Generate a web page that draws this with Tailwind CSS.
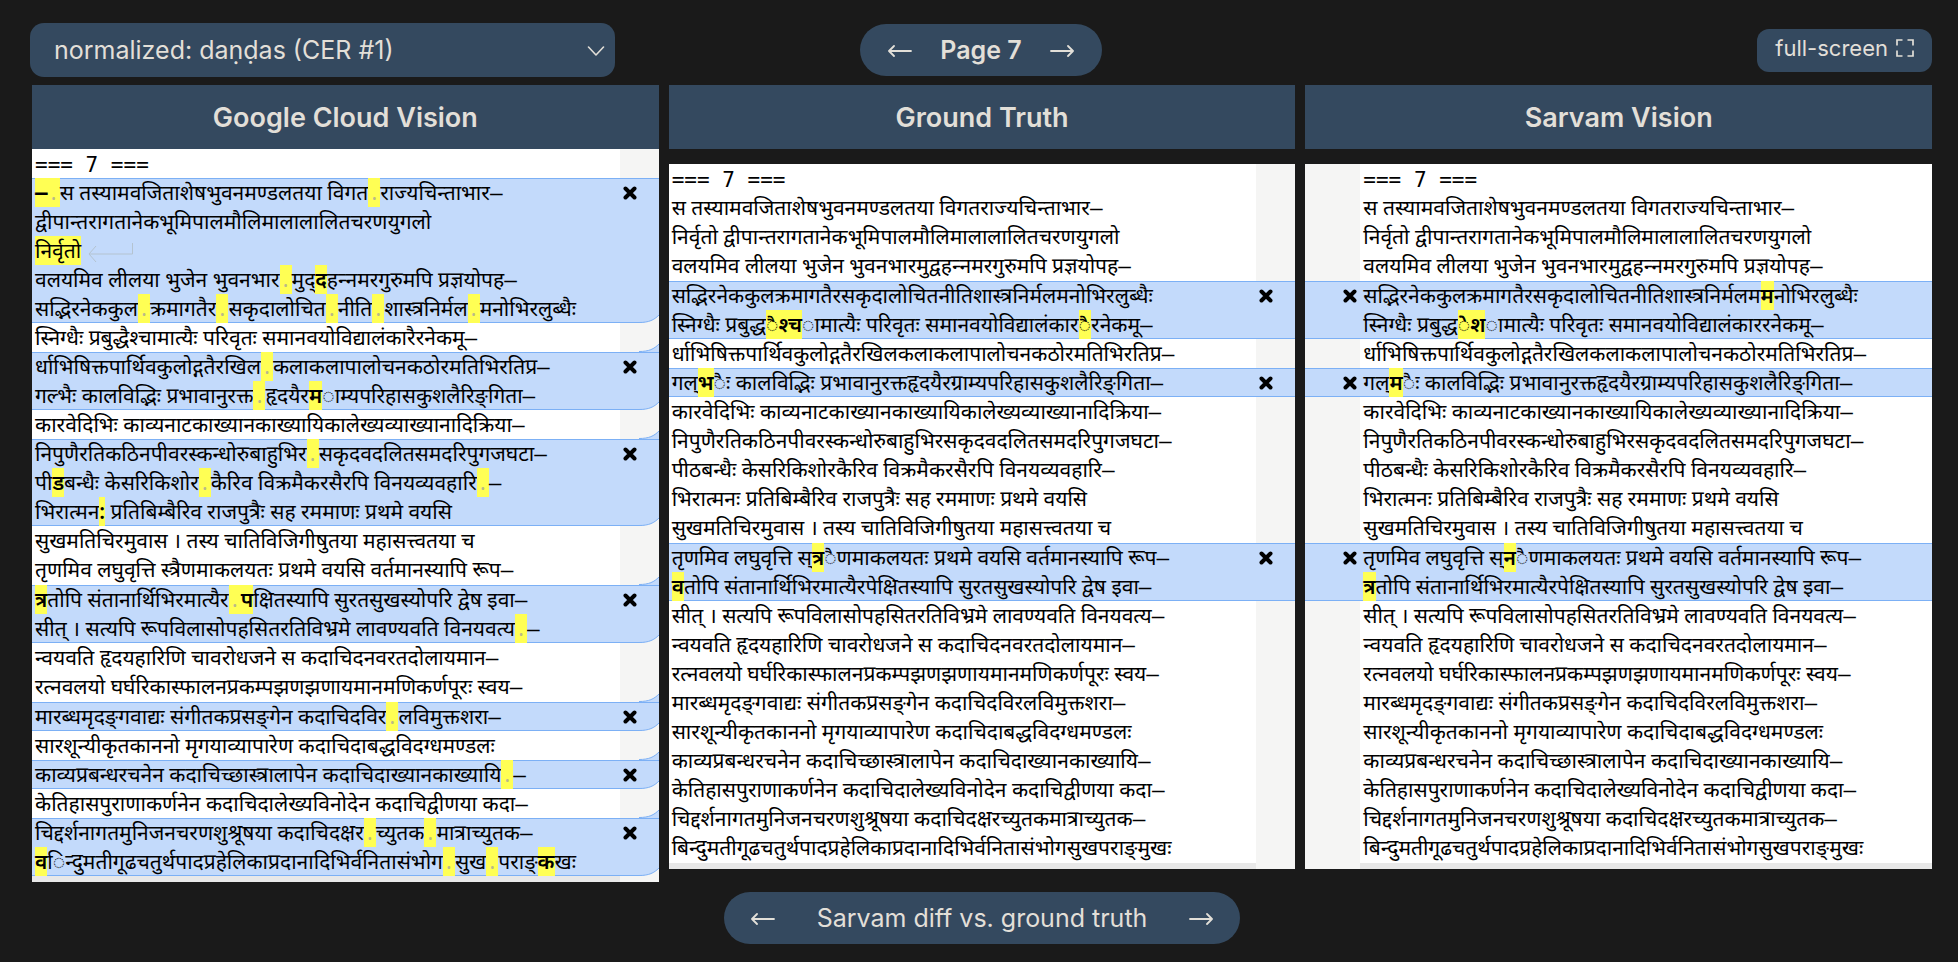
<!DOCTYPE html>
<html lang="en">
<head>
<meta charset="utf-8">
<title>OCR comparison – Page 7</title>
<script src="https://cdn.jsdelivr.net/npm/@tailwindcss/browser@4"></script>
</head>
<body class="flex min-h-screen flex-col bg-[#1a1a1a] font-[Inter,sans-serif] text-[#e2dfd8]">
<header class="grid grid-cols-[1fr_auto_1fr] items-center pt-[23px] pr-[26px] pb-2 pl-[30px]">
  <div class="relative w-full max-w-[585px]">
    <select aria-label="Text normalization" class="h-[54px] w-full appearance-none rounded-[14px] bg-[#34495f] pt-0.5 pr-12 pl-6 text-[25px]">
      <option>normalized: daṇḍas (CER #1)</option>
    </select>
    <svg class="pointer-events-none absolute top-[23px] right-[10px] h-[10px] w-[18px]" viewBox="0 0 18 10" fill="none" stroke="currentColor" stroke-width="1.6" stroke-linecap="round" stroke-linejoin="round"><path d="M1.5 1 9 9l7.500-8"/></svg>
  </div>
  <nav aria-label="Pages" class="flex h-[52px] items-center gap-7 rounded-full bg-[#34495f] px-7 pt-0.5">
    <button aria-label="Previous page"><svg class="h-4 w-6" viewBox="0 0 24 16" fill="none" stroke="currentColor" stroke-width="1.8" stroke-linecap="round" stroke-linejoin="round"><path d="M23 8H1.500M6 3 1 8l5 5"/></svg></button>
    <span class="text-[25px] font-semibold">Page 7</span>
    <button aria-label="Next page"><svg class="h-4 w-6" viewBox="0 0 24 16" fill="none" stroke="currentColor" stroke-width="1.8" stroke-linecap="round" stroke-linejoin="round"><path d="M1 8h21.500M18 3l5 5-5 5"/></svg></button>
  </nav>
  <button class="flex h-[43px] items-center gap-2 justify-self-end rounded-xl bg-[#34495f] px-[18px] pb-1 text-[22px]">full-screen
    <svg class="h-[18px] w-[18px]" viewBox="0 0 18 18" fill="none" stroke="currentColor" stroke-width="1.700"><path d="M1 6.500V1h5.500M11.500 1H17v5.500M17 11.500V17h-5.500M6.500 17H1v-5.500"/></svg>
  </button>
</header>

<main class="grid grid-cols-3 items-start gap-2.5 pr-[26px] pl-8">
  <section>
    <h2 class="flex h-16 items-center justify-center bg-[#34495f] pt-0.5 text-[27px] font-semibold">Google Cloud Vision</h2>
    <div id="google" lang="sa" class="bg-[#f5f5f4] font-['Noto_Sans','Noto_Sans_Devanagari',sans-serif] text-[21px] leading-[29px] text-black"></div>
  </section>
  <section>
    <h2 class="flex h-16 items-center justify-center bg-[#34495f] pt-0.5 text-[27px] font-semibold">Ground Truth</h2>
    <div id="truth" lang="sa" class="mt-[15px] bg-[#f5f5f4] font-['Noto_Sans','Noto_Sans_Devanagari',sans-serif] text-[21px] leading-[29px] text-black"></div>
  </section>
  <section>
    <h2 class="flex h-16 items-center justify-center bg-[#34495f] pt-0.5 text-[27px] font-semibold">Sarvam Vision</h2>
    <div id="sarvam" lang="sa" class="mt-[15px] bg-[#f5f5f4] font-['Noto_Sans','Noto_Sans_Devanagari',sans-serif] text-[21px] leading-[29px] text-black"></div>
  </section>
</main>

<footer class="mt-auto flex justify-center pr-[26px] pb-[18px] pl-8">
  <nav aria-label="Comparison" class="flex h-[52px] items-center gap-[42px] rounded-full bg-[#34495f] px-[27px] pt-0.5">
    <button aria-label="Previous comparison"><svg class="h-4 w-6" viewBox="0 0 24 16" fill="none" stroke="currentColor" stroke-width="1.8" stroke-linecap="round" stroke-linejoin="round"><path d="M23 8H1.500M6 3 1 8l5 5"/></svg></button>
    <span class="text-[25px]">Sarvam diff vs. ground truth</span>
    <button aria-label="Next comparison"><svg class="h-4 w-6" viewBox="0 0 24 16" fill="none" stroke="currentColor" stroke-width="1.8" stroke-linecap="round" stroke-linejoin="round"><path d="M1 8h21.500M18 3l5 5-5 5"/></svg></button>
  </nav>
</footer>

<script>
// A block starting with "~" differs from the ground truth. Within a line,
// [..] is a highlighted change, {..} a moved word, "·" a visible space
// and "⏎" a moved line end.
const google = [
`~[–·]स तस्यामवजिताशेषभुवनमण्डलतया विगत[·]राज्यचिन्ताभार–
द्वीपान्तरागतानेकभूमिपालमौलिमालालालितचरणयुगलो
{निर्वृतो}⏎
वलयमिव लीलया भुजेन भुवनभार[·]मुद्[द]हन्नमरगुरुमपि प्रज्ञयोपह–
सद्भिरनेककुल[·]क्रमागतैर[·]सकृदालोचित[·]नीति[·]शास्त्रनिर्मल[·]मनोभिरलुब्धैः`,
`स्निग्धैः प्रबुद्धैश्चामात्यैः परिवृतः समानवयोविद्यालंकारैरनेकमू–`,
`~र्धाभिषिक्तपार्थिवकुलोद्गतैरखिल[·]कलाकलापालोचनकठोरमतिभिरतिप्र–
गल्भैः कालविद्भिः प्रभावानुरक्त[·]हृदयैर[म]ाम्यपरिहासकुशलैरिङ्गिता–`,
`कारवेदिभिः काव्यनाटकाख्यानकाख्यायिकालेख्यव्याख्यानादिक्रिया–`,
`~निपुणैरतिकठिनपीवरस्कन्धोरुबाहुभिर[·]सकृदवदलितसमदरिपुगजघटा–
पी[ड]बन्धैः केसरिकिशोर[·]कैरिव विक्रमैकरसैरपि विनयव्यवहारि[·]–
भिरात्मन[:] प्रतिबिम्बैरिव राजपुत्रैः सह रममाणः प्रथमे वयसि`,
`सुखमतिचिरमुवास । तस्य चातिविजिगीषुतया महासत्त्वतया च
तृणमिव लघुवृत्ति स्त्रैणमाकलयतः प्रथमे वयसि वर्तमानस्यापि रूप–`,
`~[त्र]तोपि संतानार्थिभिरमात्यैर[·प]क्षितस्यापि सुरतसुखस्योपरि द्वेष इवा–
सीत् । सत्यपि रूपविलासोपहसितरतिविभ्रमे लावण्यवति विनयवत्य[·]–`,
`न्वयवति हृदयहारिणि चावरोधजने स कदाचिदनवरतदोलायमान–
रत्नवलयो घर्घरिकास्फालनप्रकम्पझणझणायमानमणिकर्णपूरः स्वय–`,
`~मारब्धमृदङ्गवाद्यः संगीतकप्रसङ्गेन कदाचिदविर[·]लविमुक्तशरा–`,
`सारशून्यीकृतकाननो मृगयाव्यापारेण कदाचिदाबद्धविदग्धमण्डलः`,
`~काव्यप्रबन्धरचनेन कदाचिच्छास्त्रालापेन कदाचिदाख्यानकाख्यायि[·]–`,
`केतिहासपुराणाकर्णनेन कदाचिदालेख्यविनोदेन कदाचिद्वीणया कदा–`,
`~चिद्दर्शनागतमुनिजनचरणशुश्रूषया कदाचिदक्षर[·]च्युतक[·]मात्राच्युतक–
[व]िन्दुमतीगूढचतुर्थपादप्रहेलिकाप्रदानादिभिर्वनितासंभोग[·]सुख[·]पराङ्[क]खः`];

const opening = `स तस्यामवजिताशेषभुवनमण्डलतया विगतराज्यचिन्ताभार–
निर्वृतो द्वीपान्तरागतानेकभूमिपालमौलिमालालालितचरणयुगलो
वलयमिव लीलया भुजेन भुवनभारमुद्वहन्नमरगुरुमपि प्रज्ञयोपह–`;
const crowned = `र्धाभिषिक्तपार्थिवकुलोद्गतैरखिलकलाकलापालोचनकठोरमतिभिरतिप्र–`;
const middle = `कारवेदिभिः काव्यनाटकाख्यानकाख्यायिकालेख्यव्याख्यानादिक्रिया–
निपुणैरतिकठिनपीवरस्कन्धोरुबाहुभिरसकृदवदलितसमदरिपुगजघटा–
पीठबन्धैः केसरिकिशोरकैरिव विक्रमैकरसैरपि विनयव्यवहारि–
भिरात्मनः प्रतिबिम्बैरिव राजपुत्रैः सह रममाणः प्रथमे वयसि
सुखमतिचिरमुवास । तस्य चातिविजिगीषुतया महासत्त्वतया च`;
const closing = `सीत् । सत्यपि रूपविलासोपहसितरतिविभ्रमे लावण्यवति विनयवत्य–
न्वयवति हृदयहारिणि चावरोधजने स कदाचिदनवरतदोलायमान–
रत्नवलयो घर्घरिकास्फालनप्रकम्पझणझणायमानमणिकर्णपूरः स्वय–
मारब्धमृदङ्गवाद्यः संगीतकप्रसङ्गेन कदाचिदविरलविमुक्तशरा–
सारशून्यीकृतकाननो मृगयाव्यापारेण कदाचिदाबद्धविदग्धमण्डलः
काव्यप्रबन्धरचनेन कदाचिच्छास्त्रालापेन कदाचिदाख्यानकाख्यायि–
केतिहासपुराणाकर्णनेन कदाचिदालेख्यविनोदेन कदाचिद्वीणया कदा–
चिद्दर्शनागतमुनिजनचरणशुश्रूषया कदाचिदक्षरच्युतकमात्राच्युतक–
बिन्दुमतीगूढचतुर्थपादप्रहेलिकाप्रदानादिभिर्वनितासंभोगसुखपराङ्मुखः`;

const truth = [opening,
`~सद्भिरनेककुलक्रमागतैरसकृदालोचितनीतिशास्त्रनिर्मलमनोभिरलुब्धैः
स्निग्धैः प्रबुद्ध[ैश्च]ामात्यैः परिवृतः समानवयोविद्यालंकार[ै]रनेकमू–`,
crowned,
`~गल्[भ]ैः कालविद्भिः प्रभावानुरक्तहृदयैरग्राम्यपरिहासकुशलैरिङ्गिता–`,
middle,
`~तृणमिव लघुवृत्ति स्[त्र]ैणमाकलयतः प्रथमे वयसि वर्तमानस्यापि रूप–
[व]तोपि संतानार्थिभिरमात्यैरपेक्षितस्यापि सुरतसुखस्योपरि द्वेष इवा–`,
closing];

const sarvam = [opening,
`~सद्भिरनेककुलक्रमागतैरसकृदालोचितनीतिशास्त्रनिर्मलम[म]नोभिरलुब्धैः
स्निग्धैः प्रबुद्ध[ेश]ामात्यैः परिवृतः समानवयोविद्यालंकाररनेकमू–`,
crowned,
`~गल्[म]ैः कालविद्भिः प्रभावानुरक्तहृदयैरग्राम्यपरिहासकुशलैरिङ्गिता–`,
middle,
`~तृणमिव लघुवृत्ति स्[न]ैणमाकलयतः प्रथमे वयसि वर्तमानस्यापि रूप–
[त्र]तोपि संतानार्थिभिरमात्यैरपेक्षितस्यापि सुरतसुखस्योपरि द्वेष इवा–`,
closing];

const marks = {
  '–': `<span class="font-['DejaVu_Sans_Mono',monospace]">–</span>`,
  '·': '<span class="inline-block w-3 text-center font-normal text-[#b9b98a]">.</span>',
  '[': '<mark class="inline-block h-[29px] bg-[#ffff54] align-top font-semibold text-black">',
  '{': '<mark class="inline-block h-[29px] bg-[#ffff54] align-top text-black">',
  ']': '</mark>',
  '}': '</mark>',
  '⏎': '<svg class="ml-1.5 inline-block h-5 w-12" viewBox="0 0 48 20" fill="none" stroke="#b4c3d0" stroke-width="1"><path d="M45.500 1v11H2M9 4l-7 8 7 8"/></svg>',
};
// The joiners keep ङ् with a visible virama and न्न in its linear form.
const line = (s) => '<p class="h-[29px] whitespace-pre">' + s
  .replace(/ङ्(?=[गम])/g, 'ङ्\u200c')
  .replace(/न्न/g, 'न्\u200dन')
  .replace(/[–·\[\]{}⏎]/g, (c) => marks[c]) + '</p>';

const cross = '<button aria-label="Dismiss change" class="flex h-[29px] items-center"><svg class="h-[14px] w-[14px]" viewBox="0 0 14 14" fill="none" stroke="#000" stroke-width="4" stroke-linecap="round"><path d="M2.500 2.500l9 9M11.500 2.500l-9 9"/></svg></button>';
const bend = (place, fill) => `<svg class="absolute right-0 ${place} h-2 w-5" viewBox="0 0 20 8"><path d="M0 7.500C10 7.500 15 5 20 0V8H0Z" fill="${fill}"/><path d="M0 7.500C10 7.500 15 5 20 0" fill="none" stroke="#7cb0f5"/></svg>`;

function draw(id, blocks, gutterLeft, bends) {
  const order = gutterLeft ? 'flex-row-reverse' : 'flex-row';
  const gutter = gutterLeft ? 'w-[55px] shrink-0 flex justify-end pr-[3px]' : 'w-[39px] shrink-0 pl-[3px]';
  const text = 'min-w-0 flex-1 pl-[3px]';
  let html = `<div class="flex ${order}"><p class="${text} h-[29px] whitespace-pre bg-white pt-0.5 font-['DejaVu_Sans_Mono',monospace]">=== 7 ===</p><div class="${gutter}"></div></div>`;
  blocks.forEach((b, i) => {
    const changed = b[0] === '~';
    const rows = b.replace('~', '').split('\n');
    const lines = rows.map(line).join('');
    if (changed) {
      const curves = bends ? (i ? bend('bottom-full', '#c3dafb') : '') + bend('bottom-0', '#f5f5f4') : '';
      html += `<div class="relative flex ${order} bg-[#c3dafb] shadow-[inset_0_1px_0_#7cb0f5,inset_0_-1px_0_#7cb0f5]"><div class="${text}">${lines}</div><div class="${gutter}">${cross}</div>${curves}</div>`;
    } else {
      html += `<div class="flex ${order}"><div class="${text} bg-white ${rows.length > 1 ? 'pb-px' : ''}">${lines}</div><div class="${gutter}"></div></div>`;
    }
  });
  html += `<div class="flex ${order}"><div class="h-1.5 flex-1 bg-[#e8e8e8]"></div><div class="${gutter}"></div></div>`;
  document.getElementById(id).innerHTML = html;
}
draw('google', google, false, true);
draw('truth', truth, false, false);
draw('sarvam', sarvam, true, false);
</script>
</body>
</html>
